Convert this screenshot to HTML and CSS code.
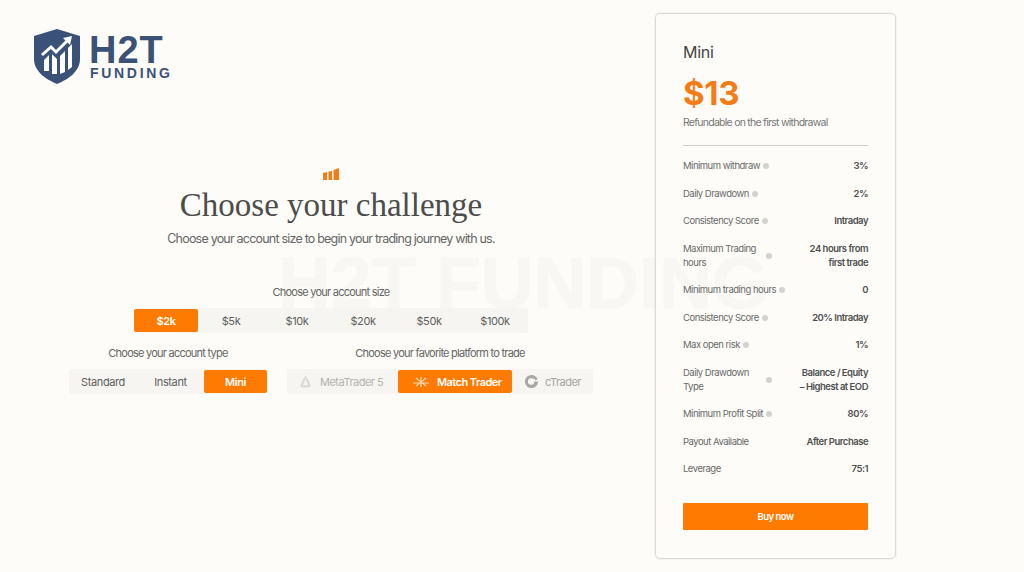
FILE: index.html
```html
<!DOCTYPE html>
<html lang="en">
<head>
  <meta charset="UTF-8"/>
  <meta name="viewport" content="width=device-width,initial-scale=1"/>
  <title>H2T Funding</title>
  <link rel="stylesheet" href="styles.css">
</head>
<body>
  <div class="watermark">H2T FUNDING</div>

  <div class="page">
    <main class="left">
      <a class="logo" href="#">
        <svg class="logo-mark" viewBox="0 0 46 55" width="46" height="55">
          <path d="M23 0 L46 7 V30 C46 42 35 50 23 55 C11 50 0 42 0 30 V7 Z" fill="#3b5278"/>
          <path d="M8 26 L17 18 L22 23 L33 12" fill="none" stroke="#fff" stroke-width="3"/>
          <path d="M29 9 L38 7 L36 16 Z" fill="#fff"/>
          <path d="M10 31 L15 26 V42 H10 Z M18 25 L23 30 V45 H18 Z M26 27 L31 22 V43 L26 45 Z M34 19 L38 15 V38 L34 41 Z" fill="#fff"/>
        </svg>
        <span class="logo-text">
          <span class="logo-name">H2T</span>
          <span class="logo-sub">FUNDING</span>
        </span>
      </a>

      <section class="hero">
        <svg class="hero-icon" viewBox="0 0 16 12" width="16" height="12">
          <path d="M0 5 L4 4 V12 H0 Z M5.5 3.5 L9 3 V12 H5.5 Z M10.5 2 L16 0 V12 H10.5 Z" fill="#f57c14"/>
        </svg>
        <h1>Choose your challenge</h1>
        <p class="sub">Choose your account size to begin your trading journey with us.</p>

        <div class="group group-size">
          <div class="group-label">Choose your account size</div>
          <div class="seg">
            <a class="tab active">$2k</a>
            <a class="tab">$5k</a>
            <a class="tab">$10k</a>
            <a class="tab">$20k</a>
            <a class="tab">$50k</a>
            <a class="tab">$100k</a>
          </div>
        </div>

        <div class="options">
          <div class="group">
            <div class="group-label">Choose your account type</div>
            <div class="seg">
              <a class="tab type-standard">Standard</a>
              <a class="tab type-instant">Instant</a>
              <a class="tab type-mini active">Mini</a>
            </div>
          </div>
          <div class="group">
            <div class="group-label">Choose your favorite platform to trade</div>
            <div class="seg">
              <a class="tab platform muted">
                <svg viewBox="0 0 16 16" width="15" height="15">
                  <path d="M8 1.5 L11 6 L14 13 L11 14.5 H5 L2 13 L5 6 Z M8 5 L5.5 12 H10.5 Z" fill="#dddbd7" fill-rule="evenodd"/>
                </svg>
                MetaTrader 5
              </a>
              <a class="tab platform active">
                <svg viewBox="0 0 18 16" width="18" height="16">
                  <path d="M9 3 V13 M4 4 L14 12 M14 4 L4 12 M1 9 H17" stroke="#ffd9b5" stroke-width="1.2" fill="none"/>
                </svg>
                Match Trader
              </a>
              <a class="tab platform muted">
                <svg viewBox="0 0 16 16" width="15" height="15">
                  <path d="M8 1 A7 7 0 1 0 15 8 H11 A3.4 3.4 0 1 1 8 4.6 C10 4.6 11.5 5.5 12.5 7 L14.6 5.4 C13.3 2.8 11 1 8 1 Z" fill="#a9a7a3"/>
                </svg>
                cTrader
              </a>
            </div>
          </div>
        </div>
      </section>
    </main>

    <aside class="card">
      <h2>Mini</h2>
      <div class="price">$13</div>
      <p class="refund">Refundable on the first withdrawal</p>
      <div class="specs">
        <div class="row"><span class="key"><span>Minimum withdraw</span><i class="dot"></i></span><b>3%</b></div>
        <div class="row"><span class="key"><span>Daily Drawdown</span><i class="dot"></i></span><b>2%</b></div>
        <div class="row"><span class="key"><span>Consistency Score</span><i class="dot"></i></span><b>Intraday</b></div>
        <div class="row"><span class="key tall"><span>Maximum Trading hours</span><i class="dot"></i></span><b>24 hours from first trade</b></div>
        <div class="row"><span class="key"><span>Minimum trading hours</span><i class="dot"></i></span><b>0</b></div>
        <div class="row"><span class="key"><span>Consistency Score</span><i class="dot"></i></span><b>20% Intraday</b></div>
        <div class="row"><span class="key"><span>Max open risk</span><i class="dot"></i></span><b>1%</b></div>
        <div class="row"><span class="key tall"><span>Daily Drawdown Type</span><i class="dot"></i></span><b>Balance / Equity – Highest at EOD</b></div>
        <div class="row"><span class="key"><span>Minimum Profit Split</span><i class="dot"></i></span><b>80%</b></div>
        <div class="row"><span class="key"><span>Payout Available</span></span><b>After Purchase</b></div>
        <div class="row"><span class="key"><span>Leverage</span></span><b>75:1</b></div>
      </div>
      <button class="buy">Buy now</button>
    </aside>
  </div>
</body>
</html>
```

FILE: styles.css
```css
:root {
  --bg: #fdfcf9;
  --orange: #ff7a00;
  --seg-bg: #f6f5f2;
  --navy: #3b5278;
  --text: #565654;
  --strong: #505050;
  --line: #d9d8d4;
}
*, *::before, *::after { margin:0; padding:0; box-sizing:border-box; }
html, body { height:100%; }
body {
  font-family:'Inter',sans-serif;
  background: var(--bg);
  color: var(--text);
  overflow: hidden;
  position: relative;
}
a { color:inherit; text-decoration:none; }

.watermark {
  position: absolute;
  left: 278px;
  top: 241px;
  font-family: 'Liberation Sans',sans-serif;
  font-weight: 700;
  font-size: 73px;
  line-height: 84px;
  white-space: nowrap;
  color: #f8f7f3;
  -webkit-text-stroke: 1px #f8f7f3;
}

.page {
  position: relative;
  display: flex;
  width: 896px;
  height: 572px;
  padding: 13px 0;
}
.left { width: 655px; flex: none; padding-left: 7px; }

/* Logo */
.logo { display:flex; gap:9px; margin:16px 0 0 27px; color:var(--navy); }
.logo-mark { flex:none; }
.logo-text { display:flex; flex-direction:column; font-family:'Liberation Sans',sans-serif; font-weight:700; }
.logo-name { font-size:38px; line-height:32px; margin-top:5px; letter-spacing:1px; }
.logo-sub { font-size:14px; line-height:16px; margin-top:-1px; margin-left:1px; letter-spacing:2.7px; }

/* Hero */
.hero { display:flex; flex-direction:column; align-items:center; margin-top:84px; }
.hero-icon { display:block; }
h1 {
  font-family:'Liberation Serif',serif;
  font-weight:400;
  font-size:33px;
  line-height:40px;
  margin-top:5px;
  color:#4c4c4a;
}
.sub { font-size:12.5px; line-height:16px; margin-top:6px; letter-spacing:-.79px; color:#666; }

.group { display:flex; flex-direction:column; align-items:center; }
.group-size { margin-top:38px; }
.group-label { font-size:11px; line-height:14px; letter-spacing:-.76px; color:#666; margin-bottom:9px; }

.seg { display:flex; align-items:center; height:25px; background:var(--seg-bg); border-radius:2px; }
.tab { flex:none; width:66px; height:23px; display:flex; align-items:center; justify-content:center; font-size:11px; letter-spacing:-.4px; white-space:nowrap; color:#5f5f5d; }
.tab.active { background:var(--orange); color:#fff; font-weight:600; border-radius:2px; }
.tab svg { flex:none; }
.group-size .tab.active { width:64px; }

.options { display:flex; gap:20px; margin-top:13px; }
.type-standard { width:68px; }
.type-instant { width:67px; }
.type-mini { width:63px; }

.platform { justify-content:flex-start; gap:7px; }
.platform.active { width:114px; margin:0 11px 0 14px; padding-left:14px; letter-spacing:-.55px; }
.platform.muted { color:#b4b3b0; }
.platform:first-child { width:97px; padding-left:11px; letter-spacing:-.5px; }
.platform:last-child { width:70px; padding-left:1px; gap:6px; letter-spacing:-.5px; color:#a5a4a1; }

/* Plan card */
.card {
  flex:none;
  width:241px;
  height:546px;
  border:1px solid var(--line);
  border-radius:5px;
  box-shadow:0 0 2px rgba(0,0,0,.12);
  padding:28px 27px 0;
  display:flex;
  flex-direction:column;
}
.card h2 { font-weight:400; font-size:16px; line-height:20px; letter-spacing:-.3px; color:#444; }
.price { font-weight:700; font-size:33px; line-height:40px; margin-top:11px; color:#f57c14; letter-spacing:-.3px; }
.refund { font-size:10.5px; line-height:14px; margin-top:3px; letter-spacing:-.75px; color:#777; }

.specs { display:flex; flex-direction:column; gap:13.5px; margin-top:15px; padding-top:13px; border-top:1px solid #cfcecb; }
.row { display:flex; align-items:center; justify-content:space-between; font-size:9.5px; line-height:14px; letter-spacing:-.5px; }
.key { display:flex; align-items:center; gap:3px; color:#6a6a68; }
.key.tall span { width:80px; }
.dot { flex:none; width:6px; height:6px; border-radius:50%; background:#d3d2cf; }
.row b { font-weight:600; color:var(--strong); text-align:right; max-width:72px; }

.buy {
  margin-top:27px;
  height:27px;
  border:none;
  border-radius:1px;
  background:var(--orange);
  color:#fff;
  font-family:inherit;
  font-weight:600;
  font-size:9.5px;
  letter-spacing:-.5px;
}
```
